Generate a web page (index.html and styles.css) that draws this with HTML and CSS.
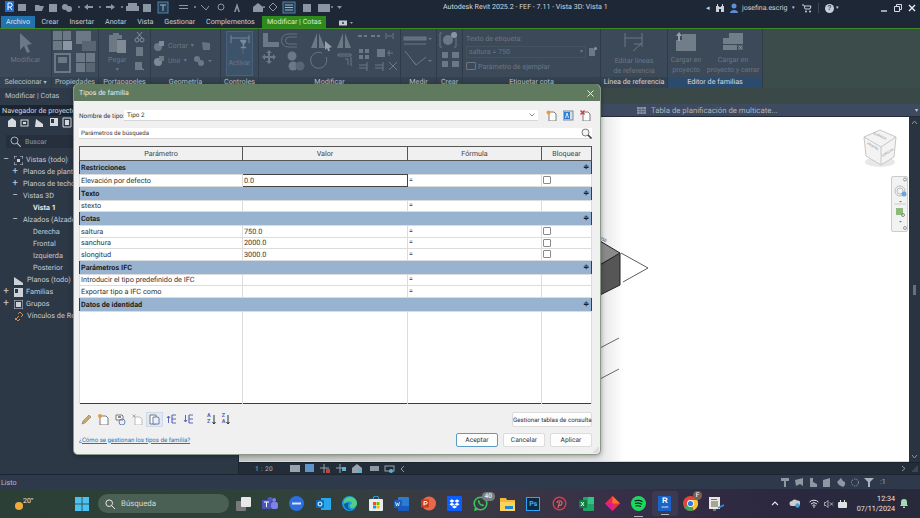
FILE: index.html
```
<!DOCTYPE html>
<html lang="es">
<head>
<meta charset="utf-8">
<title>Autodesk Revit 2025.2</title>
<link rel="stylesheet" href="styles.css">
</head>
<body>
<div class="app">
  <header class="titlebar">
    <svg class="qat" width="345" height="15" viewBox="0 0 345 15">
      <rect x="5" y="1" width="9" height="11" fill="#1f6fd0"/><path d="M8 3h3l1 1v2l-1 1h-3zM8 7v3M10 7l2 3" fill="none" stroke="#fff" stroke-width="1"/>
      <g fill="#8b96a3">
        <rect x="18" y="4" width="8" height="7"/><path d="M35 5h4l1 1h4l-2 5h-7z"/><rect x="49" y="4" width="8" height="8"/>
        <circle cx="65" cy="7" r="3"/><circle cx="69" cy="9" r="3"/><circle cx="79" cy="7" r="1"/>
        <path d="M84 7l4-3v2h5v2h-5v2z"/><circle cx="100" cy="7" r="1"/><path d="M115 7l-4-3v2h-5v2h5v2z"/><circle cx="122" cy="7" r="1"/>
        <rect x="128" y="3" width="9" height="3"/><rect x="126" y="6" width="13" height="5"/><rect x="143" y="4" width="8" height="8"/>
      </g>
      <rect x="158" y="2" width="10" height="11" fill="#263d52" stroke="#4f86ad"/><path d="M160 5h6M163 5v6" stroke="#9fb4c6"/>
      <g fill="#8b96a3">
        <path d="M179 5h9v1h-9zM179 8h9v1h-9z"/><circle cx="195" cy="7" r="1"/><path d="M201 5l5 5 3-4" fill="none" stroke="#8b96a3"/>
        <circle cx="221" cy="7" r="3" fill="none" stroke="#8b96a3"/><path d="M234 12l3-9 3 9h-1.600l-1.400-4-1.400 4z"/>
        <path d="M253 7l5-4 5 4v5h-10z"/><circle cx="264" cy="7" r="1"/><path d="M273 3l4 4-4 4-4-4z" fill="none" stroke="#8b96a3"/>
      </g>
      <rect x="283" y="2" width="12" height="11" fill="#263d52" stroke="#4f86ad"/><path d="M285 5h8M285 7.500h8M285 10h8" stroke="#9fb4c6"/>
      <g fill="#8b96a3"><rect x="303" y="4" width="8" height="8"/><rect x="318" y="4" width="12" height="8"/><circle cx="332" cy="7" r="1"/><path d="M337 6h5l-2.500 3z"/></g>
    </svg>
    <div class="doc-title">Autodesk Revit 2025.2 - FEF - 7.11 - Vista 3D: Vista 1</div>
    <div class="title-right">
      <span class="tri">◂</span>
      <svg width="10" height="10" viewBox="0 0 10 10"><path d="M1 3h3v6H1zM6 3h3v6H6zM2 1h1v2H2zM7 1h1v2H7zM4 4h2v2H4z" fill="#c9d0d8"/></svg>
      <svg class="user" width="10" height="11" viewBox="0 0 10 11"><circle cx="5" cy="3" r="2.500" fill="#5c8fd6"/><path d="M1 10c0-4 8-4 8 0z" fill="#5c8fd6"/></svg>
      <span class="username">josefina.escrig</span>
      <span class="tri tiny">▾</span>
      <svg class="cart" width="10" height="9" viewBox="0 0 10 9"><path d="M0 1h2l1 4h5l1-3H3" fill="none" stroke="#c9d0d8"/><circle cx="4" cy="7.500" r="1" fill="#c9d0d8"/><circle cx="8" cy="7.500" r="1" fill="#c9d0d8"/></svg>
      <span class="vbar"></span>
      <span class="help">?</span>
      <span class="tri tiny">▾</span>
      <span class="winbtns">
        <svg width="8" height="8" viewBox="0 0 8 8"><path d="M1 7h6" stroke="#d8dde3" stroke-width="1.400"/></svg>
        <svg width="8" height="8" viewBox="0 0 8 8"><path d="M0.500 2.500h5v5h-5zM2.500 2.500v-2h5v5h-2" fill="none" stroke="#d8dde3"/></svg>
        <svg width="8" height="8" viewBox="0 0 8 8"><path d="M1 1l6 6M7 1l-6 6" stroke="#eef1f4" stroke-width="1.400"/></svg>
      </span>
    </div>
  </header>

  <nav class="tabs">
    <span class="tab tab-file">Archivo</span>
    <span class="tab">Crear</span>
    <span class="tab">Insertar</span>
    <span class="tab">Anotar</span>
    <span class="tab">Vista</span>
    <span class="tab">Gestionar</span>
    <span class="tab">Complementos</span>
    <span class="tab tab-active">Modificar | Cotas</span>
    <svg class="tab-cam" width="14" height="6" viewBox="0 0 14 6"><rect width="8" height="5" y="0.500" fill="#c4cad1"/><circle cx="4" cy="3" r="1" fill="#2b3645"/><path d="M11 2h3l-1.500 2z" fill="#9aa3ae"/></svg>
  </nav>

  <section class="ribbon">
    <div class="panel p-sel">
      <div class="panel-body col">
        <svg width="14" height="20" viewBox="0 0 14 20"><path d="M1 0l12 11-5 1 3 7-3 1-3-7-4 4z" fill="#76818d"/></svg>
        <span class="dim">Modificar</span>
      </div>
      <div class="panel-label">Seleccionar <span class="arrow">▾</span></div>
    </div>
    <div class="panel p-prop">
      <div class="panel-body">
        <svg width="47" height="45" viewBox="0 0 47 45"><g fill="#76818d">
          <rect x="1" y="2" width="9" height="9"/><rect x="11" y="2" width="8" height="9"/><rect x="1" y="12" width="9" height="9"/><rect x="11" y="12" width="9" height="9" fill="#9aa4af"/>
          <rect x="24" y="2" width="15" height="13"/><rect x="30" y="12" width="14" height="10" fill="#5f6b78"/>
          <rect x="3" y="25" width="15" height="18" fill="none" stroke="#76818d" stroke-width="2"/><rect x="6" y="28" width="9" height="6"/>
          <rect x="24" y="24" width="9" height="9"/><rect x="34" y="24" width="9" height="9"/><rect x="24" y="34" width="9" height="9"/><rect x="34" y="34" width="9" height="9" fill="#5f6b78"/>
        </g></svg>
      </div>
      <div class="panel-label">Propiedades</div>
    </div>
    <div class="panel p-clip">
      <div class="panel-body row-clip">
        <div class="col">
          <svg width="18" height="21" viewBox="0 0 18 21"><path d="M1 3h4V1h6v2h3v4H9v13H1z" fill="#76818d"/><rect x="9" y="8" width="9" height="13" fill="#8c96a1"/></svg>
          <span class="dim">Pegar</span>
          <span class="dim small">▾</span>
        </div>
        <svg width="11" height="40" viewBox="0 0 11 40"><g fill="none" stroke="#929ba5"><circle cx="3" cy="8" r="2"/><circle cx="8" cy="8" r="2"/><path d="M3 6l5-6M8 6l-5-6"/></g><rect x="2" y="15" width="7" height="9" fill="#76818d"/><rect x="1" y="30" width="7" height="8" fill="#76818d"/><path d="M7 36l3 2" stroke="#929ba5"/></svg>
      </div>
      <div class="panel-label">Portapapeles</div>
    </div>
    <div class="panel p-geom">
      <div class="panel-body geom">
        <div class="geom-row">
          <svg width="11" height="10" viewBox="0 0 11 10"><circle cx="4" cy="6" r="4" fill="#76818d"/><rect x="5" y="0" width="5" height="5" fill="#8c96a1"/></svg>
          <span class="dim">Cortar</span><span class="dim small">▾</span>
          <svg class="geom-gap" width="10" height="10" viewBox="0 0 10 10"><path d="M1 1l8 1v7H2z" fill="#6f7a86"/></svg>
        </div>
        <div class="geom-row">
          <svg width="11" height="10" viewBox="0 0 11 10"><circle cx="4" cy="6" r="4" fill="#8c96a1"/><rect x="5" y="0" width="5" height="5" fill="#76818d"/></svg>
          <span class="dim">Unir</span><span class="dim small">▾</span>
          <svg class="geom-gap" width="18" height="10" viewBox="0 0 18 10"><circle cx="3" cy="3" r="3" fill="#76818d"/><circle cx="7" cy="7" r="3" fill="#76818d"/><path d="M14 4h4l-2 2z" fill="#76818d"/></svg>
        </div>
      </div>
      <div class="panel-label">Geometría</div>
    </div>
    <div class="panel p-ctrl">
      <div class="panel-body">
        <div class="activar">
          <svg width="20" height="22" viewBox="0 0 20 22"><path d="M1 1v8M19 1v8M1 4h18" stroke="#8593a2" fill="none"/><path d="M10 6h6v2l-2 2v3h2v1H11v-1h2v-3l-2-2zM13 14v6" fill="#8593a2" stroke="#8593a2" stroke-width=".5"/></svg>
          <span class="dim">Activar</span>
        </div>
      </div>
      <div class="panel-label">Controles</div>
    </div>
    <div class="panel p-mod">
      <div class="panel-body">
        <svg width="142" height="46" viewBox="0 0 142 46"><g fill="#76818d">
          <path d="M4 4h5v9h11v5H4z"/><path d="M38 5h-9a5 5 0 0 0 0 13h9M38 8h-8a3 3 0 0 0 0 7h8" fill="none" stroke="#6f7a86"/>
          <path d="M52 19l6-15v15zM60 4l6 15h-6z"/><path d="M66 12l7 6-3 1 1 3-2 0-1-3-2 2z" fill="#a8b0b9"/><path d="M78 19l6-15v15zM86 4l6 15h-6z"/>
          <rect x="99" y="6" width="4" height="2"/><rect x="105" y="6" width="3" height="2"/><rect x="112" y="6" width="4" height="2"/><rect x="118" y="6" width="3" height="2"/><path d="M127 4v6M134 4v6M128 7h5" stroke="#76818d" fill="none"/>
          <path d="M16 30l3-3v2h3v-3h-2l3-3 3 3h-2v3h3v-2l3 3-3 3v-2h-3v3h2l-3 3-3-3h2v-3h-3v2z" transform="translate(-13 -2)"/>
          <circle cx="33" cy="27" r="4.500"/><circle cx="34" cy="37" r="4.500"/><circle cx="41" cy="37" r="4.500" fill="#5f6b78"/>
          <path d="M67 28a8 8 0 1 1-4-4" fill="none" stroke="#76818d"/><path d="M79 25h13v2H79zM92 28v9M86 30h3v6" stroke="#76818d" fill="none"/>
          <rect x="100" y="20" width="4" height="4"/><rect x="106" y="20" width="4" height="4"/><rect x="100" y="26" width="4" height="4"/><rect x="106" y="26" width="4" height="4"/>
          <rect x="118" y="20" width="8" height="8"/><path d="M128 24h6M130 21v6" stroke="#76818d"/>
          <path d="M100 39h8M100 36h8M108 33v9M116 39h8M116 36h8M124 33v9M130 33l8 8M138 33l-8 8" stroke="#76818d" fill="none"/>
        </g></svg>
      </div>
      <div class="panel-label">Modificar</div>
    </div>
    <div class="panel p-med">
      <div class="panel-body">
        <svg width="34" height="46" viewBox="0 0 34 46"><g fill="none" stroke="#76818d"><rect x="3" y="8" width="22" height="3" fill="#6a7582"/><path d="M3 15h22"/><path d="M4 22l11 14 10-8M15 36l-3-4"/></g><path d="M27 9h4l-2 2zM27 31h4l-2 2z" fill="#76818d"/></svg>
      </div>
      <div class="panel-label">Medir</div>
    </div>
    <div class="panel p-crear">
      <div class="panel-body">
        <svg width="26" height="46" viewBox="0 0 26 46"><g fill="#76818d"><path d="M3 4v14h2M5 4H3M17 4h2v14h-2" fill="none" stroke="#76818d"/><circle cx="11" cy="11" r="5"/><circle cx="17" cy="6" r="3" fill="#9aa4af"/><rect x="5" y="23" width="6" height="6"/><rect x="15" y="23" width="7" height="6"/><rect x="5" y="32" width="6" height="6"/><rect x="15" y="32" width="7" height="6"/></g></svg>
      </div>
      <div class="panel-label">Crear</div>
    </div>
    <div class="panel p-etq">
      <div class="panel-body etq">
        <span class="dim">Texto de etiqueta:</span>
        <div class="etq-select-row">
          <div class="etq-select"><span class="dim">saltura = 750</span><span class="dim small">▾</span></div>
          <svg width="9" height="9" viewBox="0 0 9 9"><path d="M1 1h4l2 2v6H1z" fill="#76818d"/><circle cx="7.500" cy="1.500" r="1.500" fill="#9aa4af"/></svg>
        </div>
        <label class="etq-check"><span class="box"></span><span class="dim">Parámetro de ejemplar</span></label>
      </div>
      <div class="panel-label">Etiquetar cota</div>
    </div>
    <div class="panel p-lin">
      <div class="panel-body col">
        <svg width="20" height="20" viewBox="0 0 20 20"><path d="M1 1v14M18 1v14M1 6h17M9 19l9-8M10 12h7" stroke="#76818d" fill="none"/></svg>
        <span class="dim center">Editar líneas<br>de referencia</span>
      </div>
      <div class="panel-label bright">Línea de referencia</div>
    </div>
    <div class="panel p-fam">
      <div class="panel-body fam">
        <div class="col fam-a">
          <svg width="20" height="19" viewBox="0 0 20 19"><path d="M6 2h14v17H0V8h6z" fill="#7c8793"/><path d="M3 0l3 4H4v5H2V4H0z" fill="#a8b0b9"/></svg>
          <span class="dim center">Cargar en<br>proyecto</span>
        </div>
        <div class="col fam-b">
          <svg width="20" height="19" viewBox="0 0 20 19"><path d="M6 1h14v11H0V6h6z" fill="#7c8793"/><rect y="13" width="14" height="5" fill="#7c8793"/><rect x="15" y="13" width="5" height="5" fill="#5d6875"/><path d="M16 14l3 3M19 14l-3 3" stroke="#aab2bb" stroke-width=".6"/></svg>
          <span class="dim center">Cargar en<br>proyecto y cerrar</span>
        </div>
      </div>
      <div class="panel-label blue">Editor de familias</div>
    </div>
  </section>

  <div class="optbar"><div class="opt-left">Modificar | Cotas</div></div>

  <main class="main">
    <aside class="sidebar">
      <div class="side-title"><span>Navegador de proyecto</span></div>
      <div class="side-tools">
        <svg width="70" height="11" viewBox="0 0 70 11"><g fill="#d5dae0">
          <path d="M9 1l4 3v6H5V4zM4 5h10"/><rect x="18" y="3" width="7" height="6" fill="none" stroke="#d5dae0"/><rect x="20" y="5" width="3" height="2"/>
          <path d="M33 2l7 5v3h-8z"/><path d="M47 1h8v8h-8z"/><rect x="48" y="2" width="3" height="4" fill="#2d3847"/><path d="M60 1h8v9h-8z" fill="none" stroke="#d5dae0"/><path d="M62 3h4v5h-4z"/>
        </g></svg>
      </div>
      <div class="side-search">
        <svg width="11" height="11" viewBox="0 0 11 11"><circle cx="4.500" cy="4.500" r="3.500" fill="none" stroke="#aab2bc"/><path d="M7 7l4 4" stroke="#aab2bc" stroke-width="1.200"/></svg>
        <span>Buscar</span>
      </div>
      <ul class="tree">
        <li class="l0"><span class="ex">−</span><svg class="ti" width="9" height="9" viewBox="0 0 9 9"><path d="M0 3V0h3M6 0h3v3M9 6v3H6M3 9H0V6" fill="none" stroke="#ccd2d8"/><rect x="3" y="3" width="3" height="3" fill="#ccd2d8"/></svg>Vistas (todo)</li>
        <li class="l1"><span class="ex">+</span>Planos de planta</li>
        <li class="l1"><span class="ex">+</span>Planos de techo</li>
        <li class="l1"><span class="ex">−</span>Vistas 3D</li>
        <li class="l2 strong">Vista 1</li>
        <li class="l1"><span class="ex">−</span>Alzados (Alzado 1)</li>
        <li class="l2">Derecha</li>
        <li class="l2">Frontal</li>
        <li class="l2">Izquierda</li>
        <li class="l2">Posterior</li>
        <li class="l0"><span class="ex"></span><svg class="ti" width="10" height="9" viewBox="0 0 10 9"><path d="M0 1l9 6v2H0z" fill="#ccd2d8"/></svg>Planos (todo)</li>
        <li class="l0"><span class="ex">+</span><svg class="ti" width="9" height="9" viewBox="0 0 9 9"><path d="M0 0h9v9H0z" fill="#ccd2d8"/><rect x="1" y="1" width="3" height="4" fill="#2d3847"/></svg>Familias</li>
        <li class="l0"><span class="ex">+</span><svg class="ti" width="9" height="9" viewBox="0 0 9 9"><path d="M0 0h9v9H0z" fill="none" stroke="#ccd2d8"/><path d="M2 2h5v5H2z" fill="#ccd2d8"/></svg>Grupos</li>
        <li class="l0"><span class="ex"></span><svg class="ti" width="10" height="9" viewBox="0 0 10 9"><path d="M1 8l4-4M4 2l2-2 3 3-2 2M6 7L4 9 1 6" fill="none" stroke="#d08c52"/></svg>Vínculos de Revit</li>
      </ul>
    </aside>
    <div class="workspace">
      <div class="viewtabs">
        <div class="viewtab">
          <svg width="9" height="7" viewBox="0 0 9 7"><path d="M0 0h9v7H0z" fill="#8a94a2"/><path d="M0 2.500h9M3 0v7M6 0v7M0 4.700h9" stroke="#3e4a5e" stroke-width=".5"/></svg>
          <span>Tabla de planificación de multicate...</span>
        </div>
        <span class="viewtab-menu">▾</span>
      </div>
      <div class="viewarea">
        <div class="canvas">
          <div class="dialog-shadow"></div>
          <svg class="model" width="50" height="150" viewBox="0 0 50 150">
            <path d="M0 4L20 16 0 28z" fill="#8a8a8a"/>
            <path d="M0 27L20 16V48L0 58z" fill="#565656"/>
            <path d="M0 4L20 16V48L0 58M0 28L20 16" fill="none" stroke="#222" stroke-width="1"/>
            <path d="M21 16L48 31 23 45" fill="none" stroke="#333" stroke-width=".8"/>
            <path d="M0 111L19 101M0 142L19 132" stroke="#444" stroke-width=".8"/>
          </svg>
          <span class="dim-tag">750</span>
          <svg class="viewcube" width="36" height="40" viewBox="0 0 36 40">
            <ellipse cx="18" cy="33" rx="15" ry="5" fill="#e8e8e8"/>
            <path d="M18 1l16 7-2 20-13 8-15-9L2 8z" fill="#f3f3f3" stroke="#c7c7c7"/>
            <path d="M2 8l17 10 15-10M19 18v18" fill="none" stroke="#c7c7c7"/>
            <text class="cube-t" transform="translate(11 5) rotate(25)">SUPERIOR</text>
            <text class="cube-t" transform="translate(5 15) rotate(30)">FRONTAL</text>
            <text class="cube-t" transform="translate(20.500 28) rotate(-32)">DERECHA</text>
          </svg>
          <div class="navpill">
            <svg width="14" height="54" viewBox="0 0 14 54"><circle cx="12" cy="2.500" r="1.500" fill="none" stroke="#999"/><circle cx="7" cy="14" r="5" fill="none" stroke="#bbb"/><circle cx="7" cy="14" r="3" fill="none" stroke="#bbb"/><circle cx="11" cy="17" r="2.500" fill="#6fa4db"/><path d="M6 24h3l-1.500 1.500z" fill="#777"/><path d="M1 27h12" stroke="#ccc"/><rect x="3" y="31" width="7" height="7" fill="#8dbb7e"/><circle cx="10" cy="38" r="1.500" fill="none" stroke="#888"/><path d="M6 44h3l-1.500 1.500z" fill="#777"/><circle cx="12" cy="51" r="1.500" fill="none" stroke="#999"/></svg>
          </div>
        </div>
        <div class="vscroll">
          <svg width="7" height="5" viewBox="0 0 7 5"><path d="M1 4l2.500-3L6 4" fill="none" stroke="#8a94a2"/></svg>
          <span class="vthumb"></span>
          <svg width="7" height="5" viewBox="0 0 7 5"><path d="M1 1l2.500 3L6 1" fill="none" stroke="#8a94a2"/></svg>
        </div>
      </div>
      <div class="viewbar">
        <span class="scale">1 : 20</span>
        <svg width="120" height="11" viewBox="0 0 120 11">
          <rect x="1" y="2" width="10" height="7" fill="#9aa3ad"/><rect x="16" y="1" width="9" height="8" fill="#5e94c9"/>
          <path d="M31 5h9M35 1v9" stroke="#9aa3ad"/><rect x="37" y="6" width="4" height="4" fill="#c0463c"/>
          <path d="M47 5h9M51 1v9" stroke="#9aa3ad"/><rect x="53" y="4" width="4" height="4" fill="#5fb0c9"/>
          <path d="M63 5l5-4 5 4v5H63z" fill="#9aa3ad"/><rect x="69" y="6" width="4" height="4" fill="#5fb0c9"/>
          <rect x="81" y="3" width="9" height="5" fill="#8d96a1"/><rect x="96" y="3" width="9" height="5" fill="none" stroke="#9aa3ad"/><circle cx="102" cy="8" r="2" fill="#5fb0c9"/>
          <path d="M115 3l-3 3 3 3" fill="none" stroke="#8a94a2"/>
        </svg>
        <span class="vb-end">
          <svg width="5" height="7" viewBox="0 0 5 7"><path d="M1 1l3 2.500L1 6" fill="none" stroke="#8a94a2"/></svg>
          <svg width="6" height="6" viewBox="0 0 6 6"><path d="M5 1v0M3 3v0M5 3v0M1 5v0M3 5v0M5 5v0" stroke="#8a94a2" stroke-linecap="square"/></svg>
        </span>
      </div>
    </div>
  </main>

  <footer class="status">
    <span>Listo</span>
    <svg class="status-icons" width="101" height="11" viewBox="0 0 101 11"><g fill="#8e97a2">
      <path d="M2 1h8v3H7v6H5V4H2z"/><path d="M16 3l8-2v8l-3-2-4 2z"/><path d="M31 1h3v4l4 2v3h-7z"/><path d="M44 3l7-2v9h-7z"/><path d="M58 5l4-4 2 3 2 1v3l-2 2-4-2z"/>
      <circle cx="76" cy="5.500" r="3.500" fill="none" stroke="#8e97a2" stroke-dasharray="1.500 1"/><path d="M85 1h10l-4 4v5h-2V5z" fill="#aab2bb"/>
    </g></svg>
    <span class="filter-count">:1</span>
  </footer>

  <div class="taskbar">
    <div class="weather"><span class="sun"></span><span class="temp">20°</span></div>
    <svg class="start" width="14" height="14" viewBox="0 0 14 14"><g fill="#4cc2f1"><rect width="6.600" height="6.600"/><rect x="7.400" width="6.600" height="6.600"/><rect y="7.400" width="6.600" height="6.600"/><rect x="7.400" y="7.400" width="6.600" height="6.600"/></g></svg>
    <div class="tsearch">
      <svg width="10" height="10" viewBox="0 0 10 10"><circle cx="4.200" cy="4.200" r="3.300" fill="none" stroke="#e6e9e6" stroke-width="1"/><path d="M6.700 6.700L10 10" stroke="#e6e9e6"/></svg>
      <span>Búsqueda</span>
    </div>
    <div class="apps">
      <span class="app-i"><svg width="16" height="14" viewBox="0 0 16 14"><rect y="4" width="10" height="10" rx="1" fill="#77797a"/><rect x="5" width="10" height="10" rx="1" fill="#e8e8e8"/></svg></span>
      <span class="app-i"><svg width="16" height="14" viewBox="0 0 16 14"><circle cx="12" cy="3" r="2" fill="#7b83eb"/><rect x="9" y="5" width="7" height="7" rx="2" fill="#7b83eb"/><circle cx="8" cy="2.500" r="2.500" fill="#5059c9"/><rect x="0" y="3" width="9" height="9" rx="1" fill="#4b53bc"/><path d="M2 5h5M4.500 5v5" stroke="#fff"/></svg></span>
      <span class="app-i"><svg width="15" height="15" viewBox="0 0 15 15"><circle cx="7.500" cy="7.500" r="7.500" fill="#2d6ee0"/><rect x="3" y="6.500" width="9" height="2" fill="#dbe6fb"/></svg></span>
      <span class="app-i"><svg width="15" height="14" viewBox="0 0 15 14"><rect x="5" y="1" width="10" height="12" fill="#28a8ea"/><rect y="3" width="8" height="8" rx="1" fill="#0f6cbd"/><circle cx="4" cy="7" r="2" fill="none" stroke="#fff"/></svg></span>
      <span class="app-i"><svg width="15" height="15" viewBox="0 0 15 15"><circle cx="7.500" cy="7.500" r="7.500" fill="#1b9de2"/><path d="M15 8c0-4-3-7-7-7S1 4 2 8c1-3 7-4 8-1 0 1-2 1-2 3 0 3 5 3 7-2z" fill="#52d07e"/><path d="M2 8c0 4 4 7 8 6-4-1-5-4-3-7-2 0-4 0-5 1z" fill="#0c59a4"/></svg></span>
      <span class="app-i"><svg width="14" height="15" viewBox="0 0 14 15"><path d="M4 3a3 3 0 0 1 6 0" fill="none" stroke="#38a9e0"/><rect y="3" width="14" height="12" rx="1" fill="#e9edf0"/><rect x="4" y="6" width="3" height="3" fill="#f25022"/><rect x="7.500" y="6" width="3" height="3" fill="#7fba00"/><rect x="4" y="9.500" width="3" height="3" fill="#00a4ef"/><rect x="7.500" y="9.500" width="3" height="3" fill="#ffb900"/></svg></span>
      <span class="app-i"><svg width="15" height="14" viewBox="0 0 15 14"><rect x="4" y="0" width="11" height="14" rx="1" fill="#2b7cd3"/><rect x="4" y="9" width="11" height="5" fill="#185abd"/><rect y="3" width="8" height="8" rx="1" fill="#1e5db5"/><path d="M1.500 5l1 4 1-3 1 3 1-4" fill="none" stroke="#fff" stroke-width=".7"/></svg></span>
      <span class="app-i"><svg width="15" height="15" viewBox="0 0 15 15"><circle cx="8" cy="7.500" r="7" fill="#e8684a"/><rect y="3.500" width="8" height="8" rx="1" fill="#c43e1c"/><path d="M3 9.500v-4h2a1 1 0 0 1 0 2.500H3" fill="none" stroke="#fff"/></svg></span>
      <span class="app-i"><svg width="15" height="15" viewBox="0 0 15 15"><rect width="15" height="15" rx="1" fill="#0c5dfb"/><path d="M4.500 3l3 2-3 2-3-2zM10.500 3l3 2-3 2-3-2zM4.500 7l3 2-3 2-3-2zM10.500 7l3 2-3 2-3-2zM4.500 12l3-2 3 2-3 2z" fill="#fff" transform="scale(.85) translate(1.300 .8)"/></svg></span>
      <span class="app-i wa"><svg width="15" height="15" viewBox="0 0 15 15"><circle cx="7.500" cy="7.500" r="6.300" fill="none" stroke="#3dc55a" stroke-width="1.600"/><path d="M1 15l1-4 3 3z" fill="#3dc55a"/><path d="M5 4c-1 3 3 7 6 6l-1-2-1.500 .5L6.500 6.500 7 5z" fill="#3dc55a"/></svg><b class="badge">40</b></span>
      <span class="app-i"><svg width="15" height="14" viewBox="0 0 15 14"><path d="M0 1h6l1 2h8v11H0z" fill="#f2b93c"/><rect y="5" width="15" height="9" fill="#fbd25a"/><rect x="5" y="9" width="8" height="3" fill="#1f88d0"/></svg></span>
      <span class="app-i ps"><span class="ps-i">Ps</span></span>
      <span class="app-i"><svg width="15" height="15" viewBox="0 0 15 15"><circle cx="7.500" cy="7.500" r="6.300" fill="none" stroke="#d5404d" stroke-width="1.400"/><path d="M6 12l1.500-6M5 7c0-3 5-3 5 0 0 2-2 3-3 2" fill="none" stroke="#e4626c" stroke-width="1.200"/></svg></span>
      <span class="app-i"><svg width="15" height="14" viewBox="0 0 15 14"><rect x="4" width="11" height="14" rx="1" fill="#21a366"/><rect x="9" width="6" height="7" fill="#33c481"/><rect y="3" width="8" height="8" rx="1" fill="#107c41"/><path d="M2 5l3 4M5 5L2 9" stroke="#fff"/></svg></span>
      <span class="app-i"><svg width="15" height="15" viewBox="0 0 15 15"><path d="M7.500 0L15 7.500 7.500 15 0 7.500z" fill="#ea2b4f"/><path d="M7.500 0L15 7.500 7.500 7.500z" fill="#f4742b"/><path d="M0 7.500L7.500 15V7.500z" fill="#d0209c"/></svg></span>
      <span class="app-i under"><svg width="15" height="15" viewBox="0 0 15 15"><circle cx="7.500" cy="7.500" r="7.500" fill="#1ed760"/><path d="M3.500 5c3-1 6-.5 8 .8M4 7.500c2.500-.7 5-.3 7 .8M4.500 10c2-.5 4-.2 5.500.6" fill="none" stroke="#10202a" stroke-width="1.100"/></svg></span>
      <span class="app-i active"><span class="rv"><b>R</b><i>2025</i></span></span>
      <span class="app-i"><svg width="16" height="15" viewBox="0 0 16 15"><circle cx="7.500" cy="7.500" r="7.500" fill="#e2463b"/><path d="M7.500 7.500L1 11.300a7.500 7.500 0 0 0 9.500 3z" fill="#37a853"/><path d="M7.500 4h6.700a7.500 7.500 0 0 1-3.700 10.300z" fill="#fbc02d"/><circle cx="7.500" cy="7.500" r="3.400" fill="#fff"/><circle cx="7.500" cy="7.500" r="2.600" fill="#2a7ce5"/></svg><b class="badge badge-f">F</b></span>
      <span class="app-i"><svg width="16" height="14" viewBox="0 0 16 14"><rect width="11" height="12" fill="#e9e6e1"/><rect x="2" y="2" width="6" height="1" fill="#d3483c"/><rect x="2" y="4" width="7" height="6" fill="#a8a39b"/><path d="M9 11l6-3" stroke="#3297d6" stroke-width="1.400"/><rect x="4" y="12" width="3" height="2" fill="#777"/></svg></span>
    </div>
    <div class="tray">
      <svg class="chev" width="8" height="5" viewBox="0 0 8 5"><path d="M1 4l3-3 3 3" fill="none" stroke="#e6e8ea" stroke-width="1.100"/></svg>
      <svg class="cloud" width="11" height="9" viewBox="0 0 11 9"><path d="M3 7a2.500 2.500 0 0 1 0-5 3 3 0 0 1 5-.5A2.500 2.500 0 0 1 9 7z" fill="#c9ced3"/><circle cx="8.500" cy="6.500" r="2.200" fill="#4a9ad9"/></svg>
      <svg class="wifi" width="10" height="9" viewBox="0 0 10 9"><path d="M.500 3a6.500 6.500 0 0 1 9 0M2 5a4.300 4.300 0 0 1 6 0M3.500 6.700a2 2 0 0 1 3 0" fill="none" stroke="#e2e5e8"/><circle cx="5" cy="8" r=".8" fill="#e2e5e8"/></svg>
      <svg class="vol" width="10" height="8" viewBox="0 0 10 8"><path d="M.500 2.500h1.500l2-2v7l-2-2H.500z" fill="none" stroke="#c6cacf" stroke-width=".8"/><path d="M6 2.500l3 3M9 2.500l-3 3" stroke="#c6cacf" stroke-width=".8"/></svg>
      <svg class="bat" width="10" height="8" viewBox="0 0 10 8"><rect y="2" width="9" height="6" rx="1" fill="#dfe2e5"/><rect x="2" y="0" width="1" height="2" fill="#dfe2e5"/><rect x="6" y="0" width="1" height="2" fill="#dfe2e5"/></svg>
      <div class="clock"><span>12:34</span><span>07/11/2024</span></div>
      <svg width="8" height="9" viewBox="0 0 8 9"><path d="M4 0a3 3 0 0 1 3 3v2.500L8 7H0l1-1.500V3a3 3 0 0 1 3-3z" fill="#a3dcb3"/><rect x="3" y="7.500" width="2" height="1.500" fill="#a3dcb3"/></svg>
    </div>
  </div>

  <div class="dialog">
    <div class="dlg-title">
      <span>Tipos de familia</span>
      <svg width="7" height="7" viewBox="0 0 7 7"><path d="M.500 .5l6 6M6.500 .5l-6 6" stroke="#e8eee6"/></svg>
    </div>
    <div class="dlg-body">
      <div class="name-row">
        <span class="name-label">Nombre de tipo:</span>
        <div class="name-input"><span>Tipo 2</span><svg width="6" height="4" viewBox="0 0 6 4"><path d="M.500 .5L3 3 5.500 .5" fill="none" stroke="#8a8a8a"/></svg></div>
        <div class="name-icons">
          <svg width="11" height="11" viewBox="0 0 11 11"><path d="M3 2h5l2 2v7H3z" fill="#fff" stroke="#7b7b7b"/><circle cx="2.500" cy="2.500" r="2" fill="#e99a3d"/></svg>
          <svg width="11" height="11" viewBox="0 0 11 11"><rect y="1" width="10" height="9" fill="#d6dde5" stroke="#7a8ba0"/><rect x="1" y="2" width="6" height="7" fill="#2c7fd4"/><path d="M2.500 8L4 3l1.500 5" fill="none" stroke="#fff" stroke-width=".8"/></svg>
          <svg width="11" height="11" viewBox="0 0 11 11"><path d="M3 2h5l2 2v7H3z" fill="#fff" stroke="#7b7b7b"/><path d="M.5 .5l4 4M4.500 .5l-4 4" stroke="#d23b34" stroke-width="1.400"/></svg>
        </div>
      </div>
      <div class="search-row">
        <span>Parámetros de búsqueda</span>
        <svg width="11" height="11" viewBox="0 0 11 11"><circle cx="4.500" cy="4.500" r="3.500" fill="#f0f4f7" stroke="#777"/><path d="M7 7l3.500 3.500" stroke="#444" stroke-width="1.600"/></svg>
      </div>
      <table class="ptable">
        <colgroup><col class="c1"><col class="c2"><col class="c3"><col class="c4"></colgroup>
        <thead><tr><th>Parámetro</th><th>Valor</th><th>Fórmula</th><th>Bloquear</th></tr></thead>
        <tbody>
          <tr class="grp"><td colspan="3">Restricciones</td><td class="gi">≑</td></tr>
          <tr class="h11"><td>Elevación por defecto</td><td class="sel">0.0</td><td class="eq">=</td><td><span class="cb"></span></td></tr>
          <tr class="grp"><td colspan="3">Texto</td><td class="gi">≑</td></tr>
          <tr class="h12"><td>stexto</td><td></td><td class="eq">=</td><td></td></tr>
          <tr class="grp"><td colspan="3">Cotas</td><td class="gi">≑</td></tr>
          <tr class="h11"><td>saltura</td><td>750.0</td><td class="eq">=</td><td><span class="cb"></span></td></tr>
          <tr class="h12"><td>sanchura</td><td>2000.0</td><td class="eq">=</td><td><span class="cb"></span></td></tr>
          <tr class="h11"><td>slongitud</td><td>3000.0</td><td class="eq">=</td><td><span class="cb"></span></td></tr>
          <tr class="grp"><td colspan="3">Parámetros IFC</td><td class="gi">≑</td></tr>
          <tr class="h11"><td>Introducir el tipo predefinido de IFC</td><td></td><td class="eq">=</td><td></td></tr>
          <tr class="h12"><td>Exportar tipo a IFC como</td><td></td><td class="eq">=</td><td></td></tr>
          <tr class="grp"><td colspan="3">Datos de identidad</td><td class="gi">≑</td></tr>
          <tr class="blank"><td></td><td></td><td></td><td></td></tr>
        </tbody>
      </table>
      <div class="tools-row">
        <div class="tool-icons">
          <svg width="11" height="11" viewBox="0 0 11 11"><path d="M1 10l1-3 6-6 2 2-6 6z" fill="#c9a86a" stroke="#777" stroke-width=".6"/></svg>
          <svg width="11" height="11" viewBox="0 0 11 11"><path d="M2 2h6l2 2v7H2z" fill="#fff" stroke="#777"/><circle cx="2" cy="2" r="2" fill="#e99a3d"/></svg>
          <svg width="11" height="11" viewBox="0 0 11 11"><path d="M1 1h6l1 1v4H1z" fill="#fff" stroke="#777"/><path d="M3 2h3v2H3z" fill="#888"/><circle cx="7" cy="8" r="3" fill="none" stroke="#5d86c6"/></svg>
          <svg width="11" height="11" viewBox="0 0 11 11"><path d="M3 3h5l2 2v6H3z" fill="#fff" stroke="#bbb"/><path d="M.5 .5l3 3M3.500 .5l-3 3" stroke="#aaa"/></svg>
          <span class="tool-hl"><svg width="11" height="11" viewBox="0 0 11 11"><path d="M1 1h6v9H1z" fill="#fff" stroke="#777"/><path d="M4 3h5l1 1v6H4z" fill="#eef" stroke="#6e7fa6"/></svg></span>
          <svg width="11" height="11" viewBox="0 0 11 11"><path d="M2.500 9V2M1 4l1.500-2L4 4" fill="none" stroke="#5e68b8"/><path d="M6 1h4M6 5h4M6 9h4M6 1v8" stroke="#5e68b8" stroke-width="1.200"/></svg>
          <svg width="11" height="11" viewBox="0 0 11 11"><path d="M2.500 1v7M1 6l1.500 2L4 6" fill="none" stroke="#5e68b8"/><path d="M6 1h4M6 5h4M6 9h4M6 1v8" stroke="#5e68b8" stroke-width="1.200"/></svg>
          <span class="sort sort-first"><span>A<br>Z</span><svg width="4" height="10" viewBox="0 0 4 10"><path d="M2 0v9M.5 7L2 9l1.500-2" fill="none" stroke="#333"/></svg></span>
          <span class="sort"><span>Z<br>A</span><svg width="4" height="10" viewBox="0 0 4 10"><path d="M2 0v9M.5 7L2 9l1.500-2" fill="none" stroke="#333"/></svg></span>
        </div>
        <button class="btn btn-lookup">Gestionar tablas de consulta</button>
      </div>
      <div class="foot-row">
        <a class="help-link" href="#">¿Cómo se gestionan los tipos de familia?</a>
        <div class="foot-btns">
          <button class="btn btn-main primary">Aceptar</button>
          <button class="btn btn-main">Cancelar</button>
          <button class="btn btn-main">Aplicar</button>
        </div>
      </div>
    </div>
    <svg class="grip" width="6" height="6" viewBox="0 0 6 6"><path d="M5 1v0M3 3v0M5 3v0M1 5v0M3 5v0M5 5v0" stroke="#a8a8a8" stroke-linecap="square"/></svg>
  </div>
</div>
</body>
</html>
```

FILE: styles.css
```
* { box-sizing: border-box; }
html, body { margin: 0; padding: 0; }
body { width: 920px; height: 518px; overflow: hidden; font-family: Roboto, "Liberation Sans", sans-serif; font-size: 7.200px; color: #c9ced5; background: #2d3847; text-rendering: geometricPrecision; }
svg { display: block; flex: none; }
ul { list-style: none; margin: 0; padding: 0; }

.app { position: relative; width: 920px; height: 518px; display: grid; grid-template-rows: 15px 14px 59px 16px 371px 14px 29px; }

/* title bar */
.titlebar { position: relative; background: #1d2735; display: flex; align-items: center; }
.doc-title { position: absolute; left: 443px; top: 1px; font-size: 7.100px; line-height: 11px; color: #d4d8dd; white-space: nowrap; }
.title-right { position: absolute; left: 706px; right: 0; top: 3px; display: flex; align-items: center; height: 10px; }
.tri { font-size: 7px; width: 9px; color: #c9d0d8; line-height: 10px; }
.tri.tiny { font-size: 5px; width: 8px; }
.user { margin-left: 4px; }
.username { margin: 0 5px 0 3px; font-size: 7px; width: 45px; white-space: nowrap; color: #ccd2d8; }
.cart { margin-left: 2px; }
.vbar { width: 1px; height: 10px; margin: 0 6px; background: #3f4a59; }
.help { width: 9px; height: 9px; border-radius: 50%; background: #c7ced6; color: #2a4d80; font: bold 7px/9px "Liberation Sans", sans-serif; text-align: center; margin-right: 2px; }
.winbtns { margin-left: auto; width: 36px; margin-right: 4px; display: flex; justify-content: space-between; }

/* tabs */
.tabs { background: #1d2735; display: flex; align-items: stretch; border-bottom: 1px solid #3d8a25; padding: 1px 0 0 1px; font-size: 7.200px; line-height: 12px; }
.tab { white-space: nowrap; padding: 0 5.400px; color: #c9ced5; }
.tab-file { background: #2273ad; color: #dbe7f0; width: 34px; padding: 0; text-align: center; margin-right: 1px; }
.tab-active { background: #2f8a1d; color: #dcebd7; width: 64px; padding: 0; text-align: center; margin-left: 2px; }
.tab-cam { margin: 4px 0 0 13px; }

/* ribbon */
.ribbon { display: flex; background: #3c4c4b; overflow: hidden; }
.ribbon svg { opacity: .85; }
.panel { display: flex; flex-direction: column; background: #3b4959; border-right: 1px solid #2f3b48; }
.panel-body { flex: 1; min-height: 0; }
.panel-label { height: 11px; line-height: 10px; font-size: 7.200px; text-align: center; background: #34414f; color: #bac1c9; white-space: nowrap; }
.panel-label.blue { background: #2a4a6e; color: #d4dce5; }
.panel-label.bright { background: #34424f; color: #d4d8dd; }
.arrow { font-size: 6px; }
.dim { color: #6b7783; font-size: 7.100px; line-height: 9.500px; white-space: nowrap; }
.dim.small { font-size: 6px; line-height: 6px; }
.center { text-align: center; }
.col { display: flex; flex-direction: column; align-items: center; }
.p-sel { width: 52px; }
.p-sel .panel-body { padding-top: 4px; gap: 2px; }
.p-prop { width: 47px; }
.p-clip { width: 52px; }
.row-clip { display: flex; gap: 8px; padding: 3px 0 0 9px; }
.row-clip .col { gap: 2px; }
.p-geom { width: 70px; }
.geom { display: flex; flex-direction: column; gap: 5px; padding: 12px 0 0 3px; }
.geom-row { display: flex; align-items: center; gap: 3px; height: 10px; }
.geom-gap { margin-left: 4px; }
.p-ctrl { width: 38px; }
.p-ctrl .panel-body { padding: 2px 5px 1px; }
.activar { height: 45px; background: #3c5369; border: 1px solid #46627f; display: flex; flex-direction: column; align-items: center; padding-top: 2px; gap: 2px; }
.p-mod { width: 142px; }
.p-med { width: 36px; }
.p-crear { width: 26px; }
.p-etq { width: 138px; }
.etq { padding: 5px 0 0 3px; display: flex; flex-direction: column; gap: 2px; }
.etq-select-row { display: flex; align-items: center; gap: 2px; }
.etq-select { width: 120px; height: 12px; border: 1px solid #46535f; display: flex; justify-content: space-between; align-items: center; padding: 0 2px; }
.etq-check { display: flex; align-items: center; gap: 2px; margin-top: 2px; }
.box { width: 10px; height: 8px; border: 1px solid #6a7581; border-radius: 1px; }
.p-lin { width: 67px; }
.p-lin .panel-body { padding-top: 3px; gap: 4px; }
.p-fam { width: 95px; }
.fam { display: flex; padding-top: 3px; }
.fam-a { width: 36px; gap: 4px; }
.fam-b { flex: 1; gap: 4px; }

/* options bar */
.optbar { background: #3a4948; }
.opt-left { width: 240px; height: 17px; background: #2e3a4a; padding-left: 5px; font-size: 7.200px; line-height: 16px; color: #bcc3cb; position: relative; }

/* main */
.main { display: grid; grid-template-columns: 239px 1fr; min-height: 0; }
.sidebar { background: #2d3847; border-right: 1px solid #1c242f; margin-top: 1px; border-bottom: 1px solid #1c242f; overflow: hidden; height: 370px; }
.side-title { height: 11px; background: #1c242f; font-size: 7.200px; line-height: 11px; padding-left: 2px; color: #d5dae0; white-space: nowrap; }
.side-title span { display: block; width: 71px; overflow: hidden; }
.side-tools { padding: 1px 0 0 3px; height: 14px; }
.side-search { margin: 5px 0 0 6px; height: 13px; background: #262f3c; display: flex; align-items: center; gap: 4px; padding-left: 4px; font-size: 7px; color: #7e8793; font-weight: 500; }
.tree { margin-top: 6px; font-size: 7.300px; }
.tree li { width: 73px; overflow: hidden; height: 12px; line-height: 12px; display: flex; align-items: center; white-space: nowrap; color: #c5cbd2; }
.ex { width: 10px; flex: none; text-align: center; font-size: 10px; line-height: 12px; color: #c5cbd2; }
.l0 { padding-left: 1px; }
.l1 { padding-left: 10px; }
.l2 { padding-left: 33px; }
.l1 .ex { margin-right: 3px; }
.l0 .ti { margin: 0 3px 0 3px; }
.strong { font-weight: 700; color: #e6e9ec !important; }

/* workspace */
.workspace { display: grid; grid-template-rows: 13px 345px 13px; min-width: 0; }
.viewtabs { background: #3d4a60; display: flex; align-items: center; justify-content: flex-end; border-bottom: 1px solid #232c38; padding-right: 2px; position: relative; }
.viewtab { display: flex; align-items: center; gap: 5px; font-size: 7.800px; color: #aab3bf; width: 272px; white-space: nowrap; margin-right: 6px; }
.viewtab-menu { font-size: 6px; color: #c5cbd2; }
.viewarea { display: flex; min-height: 0; }
.canvas { position: relative; flex: 1; background: #fff; overflow: hidden; border-bottom: 1px solid #d9d9d9; }
.dialog-shadow { position: absolute; left: 0; top: 0; width: 385px; height: 100%; background: linear-gradient(90deg, #c4c6c4 0, #e4e5e4 361px, #fff 385px); }
.model { position: absolute; left: 361px; top: 120px; overflow: visible; }
.dim-tag { position: absolute; left: 361px; top: 120px; font-size: 4px; color: #333; transform: rotate(28deg); }
.viewcube { position: absolute; left: 623px; top: 12px; }
.cube-t { font-size: 3px; fill: #8a8a8a; }
.navpill { position: absolute; left: 652px; top: 59px; width: 17px; height: 56px; background: #f1f2f2; border: 1px solid #c9ccd0; border-radius: 2px; padding-left: 1px; }
.vscroll { width: 11px; background: #2a3441; display: flex; flex-direction: column; align-items: center; justify-content: space-between; padding: 3px 0; position: relative; }
.vthumb { width: 3px; height: 10px; background: #657180; }
.viewbar { background: #232d3a; border-top: 1px solid #1b232e; display: flex; align-items: center; padding-left: 16px; gap: 16px; border-bottom: 1px solid #1c242f; }
.scale { font-size: 6.500px; color: #aeb5be; letter-spacing: .4px; }
.vb-end { margin-left: auto; display: flex; align-items: center; gap: 6px; padding-right: 2px; }

/* status */
.status { background: #2e3a4b; display: flex; align-items: center; font-size: 7.200px; color: #b6bdc6; padding-left: 1px; }
.status-icons { margin-left: auto; }
.filter-count { width: 40px; padding-left: 0; font-size: 7px; color: #aab2bb; }

/* taskbar */
.taskbar { background: linear-gradient(90deg, #2b3f37 0, #2f4239 28%, #3a3a44 50%, #372f48 68%, #2b2840 85%, #272a3a 100%); display: flex; align-items: center; position: relative; }
.weather { width: 75px; display: flex; padding-left: 15px; align-items: center; gap: 0; }
.sun { width: 8px; height: 8px; border-radius: 50%; background: #f2a93b; margin-top: 5px; }
.temp { font-size: 7px; color: #e8ebe8; margin-top: -6px; }
.start { margin-right: 9px; }
.tsearch { width: 131px; height: 19px; border-radius: 10px; background: #4a6054; display: flex; align-items: center; gap: 6px; padding-left: 7px; font-size: 7.900px; color: #d3d9d4; }
.apps { display: flex; margin-left: 2px; }
.app-i { position: relative; width: 26.300px; height: 29px; display: flex; align-items: center; justify-content: center; }
.app-i.active { background: #3a3a52; border-radius: 3px; height: 25px; margin-top: 2px; }
.app-i.active::after, .under::after { content: ""; position: absolute; left: 9px; right: 9px; bottom: 1px; height: 1px; background: #aeb6bd; }
.badge { position: absolute; left: 14px; top: 3px; width: 13px; height: 9px; border-radius: 5px; background: #78807c; font: 500 6.500px/9px Roboto, sans-serif; color: #f2f3f2; text-align: center; }
.badge-f { left: 15px; top: 2px; width: 9px; height: 9px; background: #7a5f55; }
.ps-i { width: 14px; height: 14px; background: #0a2a44; border: 1px solid #2fa3f5; color: #41b0f7; font: 700 7px/12px Roboto, sans-serif; text-align: center; display: block; }
.rv { width: 13px; height: 15px; background: #1c63c9; color: #fff; display: flex; flex-direction: column; align-items: center; font: 700 8px/9px "Liberation Sans", sans-serif; }
.rv i { font: 400 3px/4px "Liberation Sans", sans-serif; }
.tray { position: absolute; left: 771px; right: 0; top: 0; height: 29px; display: flex; align-items: center; }
.chev { margin-right: 10px; }
.cloud { margin-right: 9px; }
.wifi { margin-right: 5px; }
.vol { margin-right: 4px; }
.clock { display: flex; flex-direction: column; align-items: flex-end; width: 47px; margin-right: 5px; font-size: 7.200px; line-height: 10px; color: #e4e6e9; }

/* dialog */
.dialog { position: absolute; left: 73px; top: 84px; width: 528px; height: 371px; background: #f0f0f0; border: 1px solid #8a9a8a; border-top: 0; border-radius: 5px; box-shadow: 0 1px 5px rgba(0,0,0,.35); display: flex; flex-direction: column; overflow: hidden; color: #222; }
.dlg-title { height: 17px; background: #5f7a5e; display: flex; align-items: center; justify-content: space-between; padding: 1px 6px 0 5px; font-size: 7px; color: #e6ece4; flex: none; }
.dlg-body { flex: 1; padding: 9px 8px 0 5px; display: flex; flex-direction: column; min-height: 0; }
.name-row { display: flex; align-items: center; height: 11px; }
.name-label { width: 45px; font-size: 6.400px; white-space: nowrap; color: #333; }
.name-input { width: 414px; height: 11px; background: #fff; border-bottom: 1px solid #d6d6d6; display: flex; align-items: center; justify-content: space-between; padding: 0 3px 0 3px; font-size: 6.300px; color: #333; }
.name-icons { display: flex; gap: 6px; margin-left: 8px; }
.search-row { margin-top: 7px; width: 513px; height: 11px; background: #fff; border-bottom: 1px solid #d6d6d6; display: flex; align-items: center; justify-content: space-between; padding: 0 0 0 2px; font-size: 6.100px; color: #444; }
.ptable { margin-top: 7px; width: 512px; height: 258px; table-layout: fixed; border-collapse: collapse; background: #fff; border: 1px solid #3c3c3c; flex: none; font-size: 7.300px; color: #333; }
.c1 { width: 163px; } .c2 { width: 165px; } .c3 { width: 134px; } .c4 { width: 50px; }
.ptable th { height: 14px; padding: 0; background: #f0f0f0; border: 1px solid #555; font-weight: 400; font-size: 7.200px; color: #444; }
.ptable td { padding: 0 0 0 1px; border: 1px solid #dcdcdc; white-space: nowrap; overflow: hidden; line-height: 9px; }
.grp td { height: 14px; background: #98b3cf; border: 0; font-weight: 700; color: #222; }
.grp td.gi { text-align: right; font-size: 7px; padding-right: 2px; }
.h11 td { height: 11.500px; }
.h12 td { height: 11.500px; }
.ptable td.sel { border: 1px solid #444; }
.eq { font-size: 7px; }
.cb { display: block; width: 8px; height: 8px; border: 1px solid #8a8a8a; border-radius: 1px; background: #fff; }
.blank td { border-top: 1px solid #dcdcdc; border-bottom: 0; }
.tools-row { display: flex; align-items: center; justify-content: space-between; margin-top: 8px; width: 513px; height: 15px; padding-left: 2px; }
.tool-icons { display: flex; align-items: center; gap: 6px; }
.tool-hl { background: #dfe8f3; border: 1px solid #cfdae8; padding: 1px 2px; margin: 0 -3px; }
.sort { display: flex; align-items: center; gap: 1px; font: 700 5.500px/5.500px Roboto, sans-serif; color: #5e68b8; }
.sort-first { margin-left: 7px; }
.btn { font-family: Roboto, "Liberation Sans", sans-serif; font-size: 6.700px; color: #333; background: #fdfdfd; border: 1px solid #dcdcdc; border-radius: 2px; padding: 0; white-space: nowrap; text-rendering: geometricPrecision; }
.btn-lookup { width: 80px; height: 15px; font-size: 6.200px; }
.foot-row { display: flex; align-items: center; justify-content: space-between; width: 513px; margin-top: 6px; height: 14px; }
.help-link { font-size: 6.100px; color: #2a72b8; padding-left: 0; }
.foot-btns { display: flex; gap: 5px; }
.btn-main { width: 42px; height: 14px; }
.primary { border: 1px solid #5b9cc4; }
.grip { position: absolute; right: 1px; bottom: 1px; }
```
